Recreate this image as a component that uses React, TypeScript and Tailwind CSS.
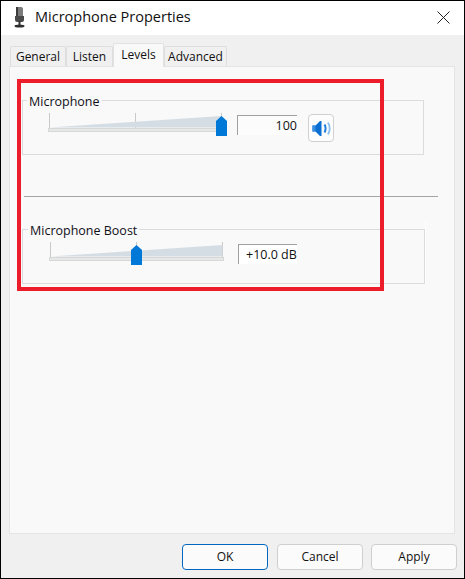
const font = { fontFamily: '"Open Sans", "Noto Sans", sans-serif' };

function Speaker() {
  return (
    <svg width="21" height="19" viewBox="0 0 21 19" fill="none">
      <path d="M1.500 6.500h3L9 2h1.500v15H9L4.500 12.500h-3z" fill="#0a6fd0" />
      <path d="M1.500 6.500h3v6h-3z" fill="#3a8fe0" />
      <path d="M13.500 5.500c1.400 2.500 1.400 5.500 0 8" stroke="#1f7ddb" strokeWidth="2" />
      <path d="M17 3.500c2.100 3.700 2.100 8.300 0 12" stroke="#8dc0ee" strokeWidth="1.800" />
    </svg>
  );
}

function Slider({ thumb }: { thumb: number }) {
  return (
    <svg width="182" height="25" viewBox="0 0 182 25" className="shrink-0">
      <path d="M2 0v15M88 0v15M174 0v15" stroke="#c9c9c9" strokeWidth="1" transform="translate(0.500 0)" />
      <path d="M2 14.500L174.500 3v11.500z" fill="#d5dde4" />
      <rect x="1.500" y="15.500" width="174" height="3" fill="#e6e8e8" stroke="#d6d8d8" />
      <path d={`M${thumb} 8l5.500-5 5.500 5v15h-11z`} fill="#0078d7" />
    </svg>
  );
}

function Group({ label, box, children }: { label: string; box: string; children: React.ReactNode }) {
  return (
    <div className={`relative h-[55px] border border-[#dcdcdc] ${box}`}>
      <span className={`absolute -top-[7px] bg-[#f9f9f9] px-[2px] text-[12.500px] leading-[16px] text-[#101018] ${label === "Microphone" ? "left-[4px]" : "left-[5px]"}`}>
        {label}
      </span>
      {children}
    </div>
  );
}

function Tab({ label, active, w }: { label: string; active?: boolean; w: string }) {
  return (
    <div
      className={
        active
          ? `${w} -mb-px mt-[1px] z-10 h-[24px] pb-[2px] flex items-center justify-center rounded-t-[2px] border border-b-0 border-[#e2e2e2] bg-[#f9f9f9] text-[12px]`
          : `${w} mt-[4px] h-[20px] flex items-center justify-center rounded-t-[2px] border border-b-0 border-[#dedede] bg-[#f0f0f0] text-[12px]`
      }
    >
      {label}
    </div>
  );
}

function Btn({ label, primary }: { label: string; primary?: boolean }) {
  return (
    <div
      className={`flex h-[26px] w-[86px] items-center justify-center rounded-[4px] border bg-[#fbfbfb] text-[12px] text-[#111] ${
        primary ? "mr-[1px] border-[#0067c0]" : "border-[#cfcfcf]"
      }`}
    >
      {label}
    </div>
  );
}

export default function App() {
  return (
    <div style={font} className="relative flex h-[579px] w-[465px] flex-col overflow-hidden border border-black bg-[#f0f0f0] text-[#111]">
      <div className="flex h-[34px] shrink-0 items-center bg-white pb-[2px] pl-[11px] pr-[14px]">
        <svg width="16" height="22" viewBox="0 0 16 22" className="mr-[7px] shrink-0">
          <rect x="4" y="1" width="7" height="11" rx="2" fill="#7b7b7b" />
          <rect x="4" y="1" width="2" height="11" fill="#3c3c3c" />
          <path d="M3 10h9v4a2 2 0 0 1-2 2H5a2 2 0 0 1-2-2z" fill="#4a4a4a" />
          <rect x="6.500" y="15" width="2" height="4" fill="#333" />
          <ellipse cx="7.500" cy="20" rx="5" ry="1.500" fill="#2d2d2d" />
        </svg>
        <span className="flex-1 text-[14.500px] leading-none">Microphone Properties</span>
        <svg width="13" height="13" viewBox="0 0 13 13" stroke="#222" strokeWidth="1">
          <path d="M.5.500l12 12M12.500.500l-12 12" />
        </svg>
      </div>

      <div className="flex flex-1 flex-col px-[8px] pt-[7px]">
        <div className="flex h-[24px] pl-[1px]">
          <Tab label="General" w="w-[56px]" />
          <Tab label="Listen" w="w-[47px]" />
          <Tab label="Levels" w="w-[51px]" active />
          <Tab label="Advanced" w="w-[63px]" />
        </div>

        <div className="flex h-[468px] w-[446px] flex-col border border-[#e4e4e4] bg-[#f9f9f9] pl-[12px] pr-[17px] pt-[33px]">
          <Group label="Microphone" box="w-[402px]">
            <div className="flex items-start pl-[24px] pt-[12px]">
              <Slider thumb={169} />
              <div className="ml-[8px] mt-[2px] flex h-[20px] w-[60px] items-center justify-end border-l border-t border-[#a0a0a0] bg-[#fcfcfc] pt-[1px] text-[12.500px]">
                100
              </div>
              <div className="ml-[11px] mt-[1px] flex h-[28px] w-[26px] items-center justify-center rounded-[4px] border border-[#d0d0d0] bg-[#fdfdfd]">
                <Speaker />
              </div>
            </div>
          </Group>

          <div className="ml-[2px] mt-[41px] h-px w-[414px] bg-[#a5a5a5]" />

          <div className="mt-[32px]">
            <Group label="Microphone Boost" box="w-[403px]">
              <div className="flex items-start pl-[25px] pt-[12px]">
                <Slider thumb={83} />
                <div className="ml-[8px] mt-[2px] flex h-[20px] w-[59px] items-center overflow-hidden whitespace-nowrap border-l border-t border-[#a0a0a0] bg-white pl-[7px] pt-[1px] text-[12.500px]">
                  +10.0 dB
                </div>
              </div>
              <div className="absolute -right-[2px] -top-[9px] bottom-0 w-px bg-white" />
            </Group>
          </div>
        </div>

        <div className="-mr-[1px] flex justify-end gap-[8px] pt-[10px]">
          <Btn label="OK" primary />
          <Btn label="Cancel" />
          <Btn label="Apply" />
        </div>
      </div>

      <div className="pointer-events-none absolute left-[16px] top-[78px] h-[212px] w-[367px] border-[4px] border-[#ed1c2a]" />
    </div>
  );
}
